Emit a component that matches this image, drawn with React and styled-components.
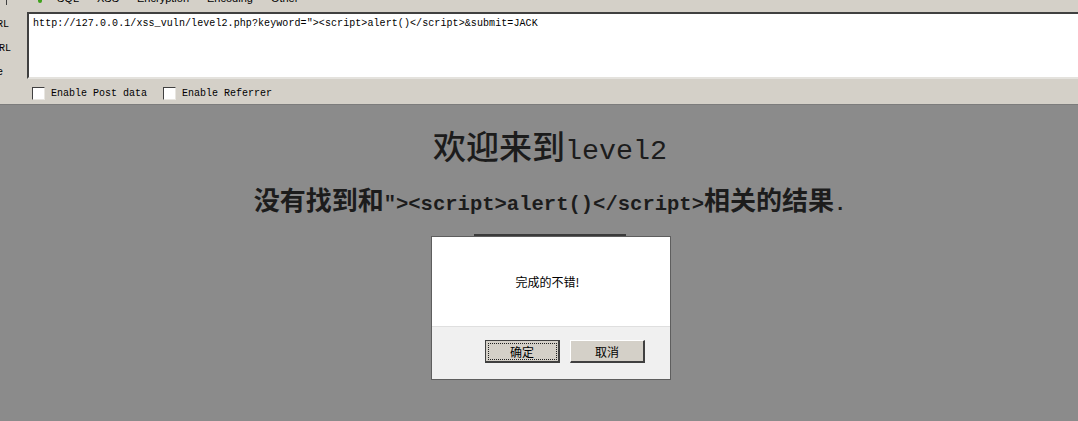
import styled, { createGlobalStyle } from "styled-components";

const GlobalStyle = createGlobalStyle`
  html, body {
    margin: 0;
    padding: 0;
    height: 421px;
    overflow: hidden;
    background: #8b8b8b;
  }
`;

const MENU = ["SQL", "XSS", "Encryption", "Encoding", "Other"];
const LABELS = [
  { text: "Load URL", shift: 2 },
  { text: "Split URL", shift: 0 },
  { text: "Execute", shift: 8 },
];
const URL =
  'http://127.0.0.1/xss_vuln/level2.php?keyword="><script>alert()</script>&submit=JACK';

export default function App() {
  return (
    <Page>
      <GlobalStyle />
      <HackBar>
        <MenuStrip>
          <CornerBox />
          <GreenDot />
          {MENU.map((m) => (
            <MenuItem key={m}>{m}</MenuItem>
          ))}
        </MenuStrip>
        <BarBody>
          <LabelCol>
            {LABELS.map((l) => (
              <SideLabel key={l.text} shift={l.shift}>
                <span>{l.text}</span>
              </SideLabel>
            ))}
          </LabelCol>
          <EditorCol>
            <UrlBox>{URL}</UrlBox>
            <Options>
              <Option>
                <Check />
                Enable Post data
              </Option>
              <Option>
                <Check />
                Enable Referrer
              </Option>
            </Options>
          </EditorCol>
        </BarBody>
      </HackBar>

      <Content>
        <Title>
          欢迎来到<Latin size="0.86em">level2</Latin>
        </Title>
        <Result>
          没有找到和
          <Latin size="0.79em">{'"><script>alert()</script>'}</Latin>
          相关的结果<Latin size="0.79em">.</Latin>
        </Result>
        <SearchBox />
      </Content>

      <Dialog>
        <DialogBody>完成的不错!</DialogBody>
        <DialogFooter>
          <Button focused>确定</Button>
          <Button>取消</Button>
        </DialogFooter>
      </Dialog>
    </Page>
  );
}

const Page = styled.div`
  position: relative;
  width: 1078px;
  height: 421px;
  overflow: hidden;
  background: #8b8b8b;
`;

const HackBar = styled.div`
  height: 104px;
  background: #d4d0c8;
  border-bottom: 1px solid #7c7c7c;
  font-family: "Liberation Mono", "Noto Sans CJK SC", monospace;
`;

const MenuStrip = styled.div`
  position: relative;
  height: 5px;
  overflow: hidden;
  display: flex;
  align-items: flex-start;
  gap: 18px;
  padding-left: 57px;
  font-family: "Liberation Sans", sans-serif;
  font-size: 11px;
  line-height: 13px;
  color: #000;
`;

const CornerBox = styled.div`
  position: absolute;
  left: -4px;
  top: -4px;
  width: 10px;
  height: 8px;
  border: 1px solid #404040;
  border-left: none;
`;

const GreenDot = styled.div`
  position: absolute;
  left: 38px;
  top: -2px;
  width: 4px;
  height: 5px;
  border-radius: 2px;
  background: #3fa21c;
`;

const MenuItem = styled.span`
  margin-top: -8px;
  white-space: nowrap;
`;

const BarBody = styled.div`
  display: flex;
`;

const LabelCol = styled.div`
  width: 27px;
  flex-shrink: 0;
  display: flex;
  flex-direction: column;
  padding-top: 14px;
  gap: 12px;
`;

const SideLabel = styled.div`
  width: 11px;
  display: flex;
  justify-content: flex-end;
  white-space: nowrap;
  font-family: "Liberation Mono", monospace;
  font-size: 10px;
  line-height: 12px;
  color: #000;
  padding-right: ${(p) => p.shift}px;
  box-sizing: border-box;
  overflow: hidden;

  span {
    flex-shrink: 0;
  }
`;

const EditorCol = styled.div`
  flex: 1;
  padding-top: 7px;
`;

const UrlBox = styled.div`
  height: 67px;
  box-sizing: border-box;
  background: #fff;
  border-top: 2px solid #404040;
  border-left: 2px solid #404040;
  border-bottom: 2px solid #e4e2dd;
  padding: 4px 0 0 4px;
  margin-right: -4px;
  font-size: 10px;
  line-height: 12px;
  letter-spacing: 0.08px;
  color: #000;
  white-space: nowrap;
`;

const Options = styled.div`
  display: flex;
  gap: 16px;
  padding: 8px 0 0 5px;
`;

const Option = styled.label`
  display: flex;
  align-items: center;
  gap: 6px;
  font-size: 10px;
  line-height: 13px;
  color: #000;
`;

const Check = styled.span`
  width: 13px;
  height: 13px;
  box-sizing: border-box;
  background: #fff;
  border-top: 1px solid #404040;
  border-left: 1px solid #404040;
  border-right: 1px solid #e8e6e1;
  border-bottom: 1px solid #e8e6e1;
`;

const Content = styled.div`
  display: flex;
  flex-direction: column;
  align-items: center;
  padding: 20px 0 0 22px;
  font-family: "Liberation Mono", "Noto Sans CJK SC", monospace;
  color: #1c1c1c;
`;

const Title = styled.h1`
  margin: 0;
  height: 40px;
  font-size: 33px;
  line-height: 40px;
  font-weight: 500;
  font-family: "Noto Sans CJK SC", sans-serif;
  white-space: nowrap;
`;

const Result = styled.h2`
  margin: 18px 0 0;
  height: 32px;
  font-size: 26px;
  line-height: 32px;
  font-weight: 700;
  font-family: "Noto Sans CJK SC", sans-serif;
  white-space: nowrap;
`;

const Latin = styled.span`
  font-family: "Liberation Mono", monospace;
  font-size: ${(p) => p.size};
`;

const SearchBox = styled.div`
  margin-top: 19px;
  width: 152px;
  height: 30px;
  border-top: 3px solid #3a3a3a;
`;

const Dialog = styled.div`
  position: absolute;
  left: 431px;
  top: 236px;
  width: 240px;
  height: 144px;
  box-sizing: border-box;
  border: 1px solid #5e5e5e;
  display: flex;
  flex-direction: column;
  font-family: "Noto Sans CJK SC", sans-serif;
  font-size: 12px;
  color: #000;
`;

const DialogBody = styled.div`
  height: 89px;
  background: #fff;
  display: flex;
  align-items: center;
  justify-content: center;
  padding-right: 7px;
  border-bottom: 1px solid #dfdfdf;
`;

const DialogFooter = styled.div`
  flex: 1;
  background: #f0f0f0;
  display: flex;
  justify-content: flex-end;
  align-items: flex-start;
  gap: 10px;
  padding: 13px 25px 0 0;
`;

const Button = styled.div`
  position: relative;
  width: 75px;
  height: 23px;
  box-sizing: border-box;
  background: #d4d0c8;
  display: flex;
  align-items: center;
  justify-content: center;
  font-size: 12px;
  border-top: 1px solid ${(p) => (p.focused ? "#404040" : "#ffffff")};
  border-left: 1px solid ${(p) => (p.focused ? "#404040" : "#ffffff")};
  border-right: 2px solid #404040;
  border-bottom: 2px solid #404040;
  outline: ${(p) => (p.focused ? "1px dotted #202020" : "none")};
  outline-offset: -4px;
`;
